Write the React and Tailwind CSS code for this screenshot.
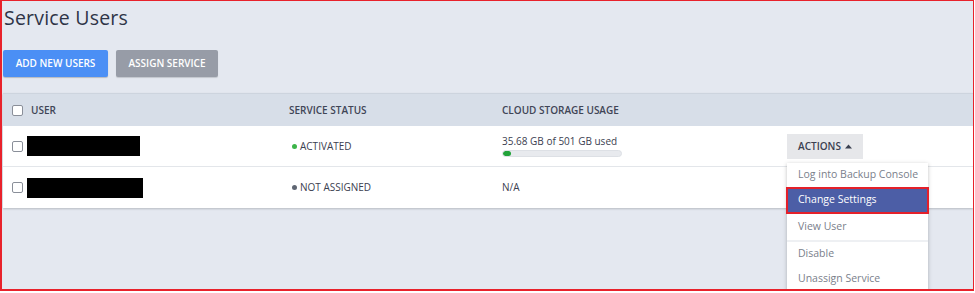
import { useState } from "react";

const USERS = [
  {
    id: 1,
    nameWidth: "w-[113px]",
    status: "ACTIVATED",
    dot: "bg-[#3cb449]",
    storage: "35.68 GB of 501 GB used",
    percent: 7,
  },
  {
    id: 2,
    nameWidth: "w-[116px]",
    status: "NOT ASSIGNED",
    dot: "bg-[#5f6673]",
    storage: null,
    percent: 0,
  },
];

const MENU = [
  { label: "Log into Backup Console", height: "h-[24px]" },
  { label: "Change Settings", active: true },
  { label: "View User", height: "h-[26px]", divider: true },
  { label: "Disable", height: "h-[25px]" },
  { label: "Unassign Service", height: "h-[25px]" },
];

function Checkbox() {
  return (
    <span className="inline-block w-[11px] h-[11px] rounded-[2px] border border-[#8a8f99] bg-white shrink-0" />
  );
}

function ActionsMenu() {
  return (
    <div className="absolute left-0 top-[29px] w-[141px] bg-white shadow-[0_1px_4px_rgba(0,0,0,0.25)] z-10">
      {MENU.map((item) => (
        <div key={item.label}>
          {item.active ? (
            <div className="-mx-[1px] border-2 border-[#e4202a]">
              <div className="h-[23px] bg-[#4c5ea6] text-white text-[10.5px] whitespace-nowrap flex items-center px-[10px]">
                {item.label}
              </div>
            </div>
          ) : (
            <div
              className={`${item.height} text-[#7a808b] text-[10.5px] whitespace-nowrap flex items-center px-[11px]`}>
              {item.label}
            </div>
          )}
          {item.divider && <div className="h-[2px] bg-[#eef0f3]" />}
        </div>
      ))}
    </div>
  );
}

export default function App() {
  const [menuOpen] = useState(true);

  return (
    <div
      className="w-[974px] h-[291px] overflow-hidden border-2 border-t-[1px] border-r-[1px] border-[#e8222b] bg-[#e4e8f0] text-[#3b4050]"
      style={{ fontFamily: '"Open Sans", "Noto Sans", sans-serif' }}>
      <div className="pl-[1px] pt-[5px]">
        <h1 className="text-[19.5px] leading-[24px] font-medium text-[#2e3447] tracking-[0.2px] pl-[1px]">
          Service Users
        </h1>

        <div className="flex gap-[8px] mt-[20px]">
          <button className="w-[105px] h-[27px] bg-[#4b8ff5] text-white text-[10px] font-semibold rounded-[2px] shadow-[0_1px_1px_rgba(0,0,0,0.2)]">
            ADD NEW USERS
          </button>
          <button className="w-[102px] h-[27px] bg-[#979ca7] text-white text-[10px] font-semibold rounded-[2px] shadow-[0_1px_1px_rgba(0,0,0,0.15)]">
            ASSIGN SERVICE
          </button>
        </div>

        <div className="mt-[16px] shadow-[0_1px_2px_rgba(0,0,0,0.2)]">
          <div className="grid grid-cols-[286px_213px_285px_1fr] h-[33px] items-center bg-[#d7dee8] border-t border-[#cdd4de] text-[10px] font-semibold text-[#3f4556]">
            <div className="flex items-center gap-[8px] pl-[9px]">
              <Checkbox />
              <span>USER</span>
            </div>
            <div>SERVICE STATUS</div>
            <div>CLOUD STORAGE USAGE</div>
            <div />
          </div>

          {USERS.map((user, index) => (
            <div
              key={user.id}
              className={`grid grid-cols-[286px_213px_285px_1fr] h-[41px] items-center bg-white ${
                index === 0 ? "border-b border-[#e3e6ea]" : ""
              }`}>
              <div className="flex items-center gap-[4px] pl-[9px]">
                <Checkbox />
                <span className={`h-[20px] ${user.nameWidth} bg-black`} />
              </div>
              <div className="flex items-center gap-[3px] text-[10px] text-[#3b4050] pl-[3px]">
                <span className={`w-[5px] h-[5px] rounded-full ${user.dot}`} />
                <span>{user.status}</span>
              </div>
              <div className="text-[10px] text-[#3b4050]">
                {user.storage ? (
                  <div className="flex flex-col gap-[2px]">
                    <span className="leading-[13px]">{user.storage}</span>
                    <div className="w-[120px] h-[7px] rounded-full bg-[#e8eaee] border border-[#dde0e5] overflow-hidden">
                      <div
                        className="h-full rounded-full bg-[#22a33a]"
                        style={{ width: `${user.percent}%` }}
                      />
                    </div>
                  </div>
                ) : (
                  <span>N/A</span>
                )}
              </div>
              <div className="relative">
                {index === 0 && (
                  <>
                    <button className="w-[76px] h-[25px] bg-[#e6e7ea] text-[10px] font-semibold text-[#3b4050] flex items-center justify-center gap-[4px]">
                      ACTIONS
                      <svg width="7" height="5" viewBox="0 0 7 5">
                        <path d="M0 4.5 L3.5 0.5 L7 4.5 Z" fill="#3b4050" />
                      </svg>
                    </button>
                    {menuOpen && <ActionsMenu />}
                  </>
                )}
              </div>
            </div>
          ))}
        </div>
      </div>
    </div>
  );
}
